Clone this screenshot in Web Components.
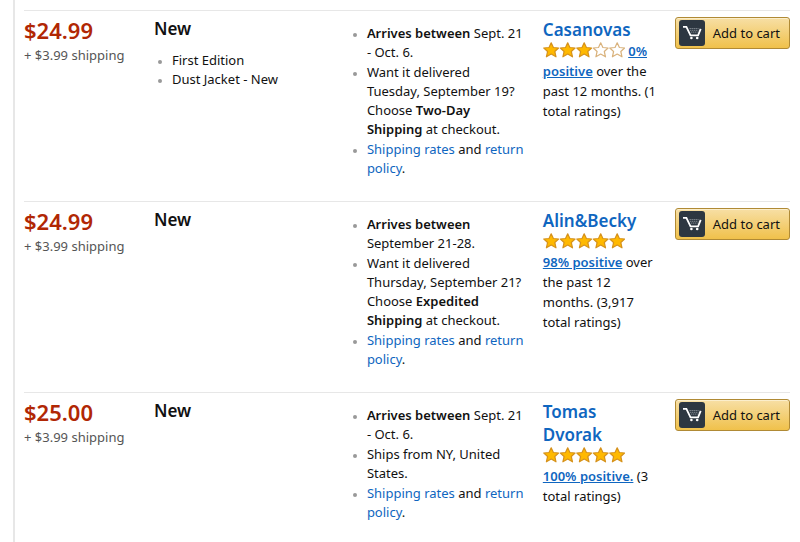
<!DOCTYPE html>
<html lang="en">
<head>
<meta charset="utf-8">
<meta name="viewport" content="width=device-width, initial-scale=1">
<title>Offers</title>
<style>
body { margin: 0; background: #fff; color: #111; font: 13px/19px "Noto Sans", "Open Sans", sans-serif; }
</style>
</head>
<body>
<offer-list>
  <offer-row>
    <price-tag slot="price" shipping="+ $3.99 shipping">$24.99</price-tag>
    <item-condition slot="condition" notes="First Edition|Dust Jacket - New">New</item-condition>
    <delivery-notes slot="delivery">
      <delivery-note><b>Arrives between</b> Sept. 21 - Oct. 6.</delivery-note>
      <delivery-note>Want it delivered Tuesday, September 19? Choose <b>Two-Day Shipping</b> at checkout.</delivery-note>
      <delivery-note><a href="#rates">Shipping rates</a> and <a href="#returns">return policy</a>.</delivery-note>
    </delivery-notes>
    <seller-info slot="seller" name="Casanovas" stars="3" score="0% positive">over the past 12 months. (1 total ratings)</seller-info>
  </offer-row>
  <offer-row>
    <price-tag slot="price" shipping="+ $3.99 shipping">$24.99</price-tag>
    <item-condition slot="condition">New</item-condition>
    <delivery-notes slot="delivery">
      <delivery-note><b>Arrives between</b> September 21-28.</delivery-note>
      <delivery-note>Want it delivered Thursday, September 21? Choose <b>Expedited Shipping</b> at checkout.</delivery-note>
      <delivery-note><a href="#rates">Shipping rates</a> and <a href="#returns">return policy</a>.</delivery-note>
    </delivery-notes>
    <seller-info slot="seller" name="Alin&amp;Becky" stars="5" score="98%&nbsp;positive">over the past 12 months. (3,917 total ratings)</seller-info>
  </offer-row>
  <offer-row>
    <price-tag slot="price" shipping="+ $3.99 shipping">$25.00</price-tag>
    <item-condition slot="condition">New</item-condition>
    <delivery-notes slot="delivery">
      <delivery-note><b>Arrives between</b> Sept. 21 - Oct. 6.</delivery-note>
      <delivery-note>Ships from NY, United States.</delivery-note>
      <delivery-note><a href="#rates">Shipping rates</a> and <a href="#returns">return policy</a>.</delivery-note>
    </delivery-notes>
    <seller-info slot="seller" name="Tomas Dvorak" stars="5" score="100%&nbsp;positive.">(3 total ratings)</seller-info>
  </offer-row>
</offer-list>

<script>
const define = (name, html, setup) => {
  const template = document.createElement('template');
  template.innerHTML = html;
  customElements.define(name, class extends HTMLElement {
    constructor() {
      super();
      this.attachShadow({ mode: 'open' }).append(template.content.cloneNode(true));
    }
    connectedCallback() {
      if (setup && !this.ready) { this.ready = true; setup(this, this.shadowRoot); }
    }
  });
};

define('offer-list', `
<style>
:host { display: block; box-sizing: border-box; min-height: 100vh; margin-left: 13px; padding: 10px 10px 0 9px; border-left: 2px solid #e7e7e7; }
</style>
<slot></slot>`);

define('offer-row', `
<style>
:host { display: grid; grid-template-columns: 130fr 200fr 189fr 132fr auto; align-items: start; padding: 6px 0 23px; border-top: 1px solid #e7e7e7; }
</style>
<slot name="price"></slot>
<slot name="condition"></slot>
<slot name="delivery"></slot>
<slot name="seller"></slot>
<cart-button>Add to cart</cart-button>`);

define('price-tag', `
<style>
:host { display: flex; flex-direction: column; gap: 3px; color: #555; }
strong { color: #b12704; font-size: 22px; line-height: 26px; font-weight: 600; }
</style>
<strong><slot></slot></strong><span></span>`,
(host, root) => { root.querySelector('span').textContent = host.getAttribute('shipping'); });

define('item-condition', `
<style>
:host { display: block; }
h3 { margin: 0; font-size: 17px; line-height: 24px; font-weight: 600; }
ul { margin: 10px 0 0; padding: 0 0 0 18px; }
li::marker { color: #999; font-size: 10px; }
</style>
<h3><slot></slot></h3>`,
(host, root) => {
  const notes = host.getAttribute('notes');
  if (!notes) return;
  const list = document.createElement('ul');
  for (const note of notes.split('|')) {
    const item = document.createElement('li');
    item.textContent = note;
    list.append(item);
  }
  root.append(list);
});

define('delivery-notes', `
<style>
:host { display: flex; flex-direction: column; gap: 1px; padding: 7px 18px 0 13px; }
</style>
<slot></slot>`,
host => host.setAttribute('role', 'list'));

define('delivery-note', `
<style>
:host { display: block; }
div { display: list-item; list-style: disc; }
div::marker { color: #999; font-size: 10px; }
::slotted(b) { font-weight: 600; }
::slotted(a) { color: #0f66c0; text-decoration: none; }
</style>
<div role="listitem"><slot></slot></div>`);

define('seller-info', `
<style>
:host { display: block; padding: 1px 16px 0 0; line-height: 20px; }
h3 { margin: 0; font-size: 17px; line-height: 23px; font-weight: 600; }
a { color: #0f66c0; }
h3 a { text-decoration: none; }
p { margin: 0; }
p a { font-weight: 600; }
</style>
<h3><a href="#seller"></a></h3>
<p><star-rating></star-rating> <a href="#ratings"></a> <slot></slot></p>`,
(host, root) => {
  root.querySelector('h3 a').textContent = host.getAttribute('name');
  root.querySelector('star-rating').setAttribute('value', host.getAttribute('stars'));
  root.querySelector('p a').textContent = host.getAttribute('score');
});

// Defined after seller-info, which sets the value it reads.
define('star-rating', `
<style>
:host { display: inline-flex; vertical-align: -2px; }
svg { display: block; width: 82px; height: 16px; }
path { fill: #fff; stroke: #d9b27c; stroke-width: 1.2; stroke-linejoin: round; }
.on { fill: #ffb900; stroke: #d6921c; }
</style>`,
(host, root) => {
  const value = Number(host.getAttribute('value'));
  host.setAttribute('role', 'img');
  host.setAttribute('aria-label', value + ' out of 5 stars');
  const star = 'M8.2 .8 10.4 5.5 15.6 6 11.8 9.5 13 14.8 8.2 12.1 3.4 14.8 4.6 9.5 .8 6 6 5.5Z';
  let stars = '';
  for (let i = 0; i < 5; i++) {
    stars += `<path class="${i < value ? 'on' : ''}" transform="translate(${i * 16.5})" d="${star}"/>`;
  }
  root.innerHTML += `<svg viewBox="0 0 82 16">${stars}</svg>`;
});

define('cart-button', `
<style>
:host { display: block; }
button { display: flex; align-items: center; gap: 8px; margin: 0; padding: 2px 9px 2px 3px; border: 1px solid #b08a35; border-radius: 3px; background: linear-gradient(#f7dfa5, #f0c14b); box-shadow: inset 0 1px 0 #fbeecb; color: #111; font: inherit; line-height: 26px; white-space: nowrap; cursor: pointer; }
svg { width: 26px; height: 26px; border-radius: 3px; background: #2d3741; }
</style>
<button type="button">
<svg viewBox="0 0 26 26" aria-hidden="true" fill="none" stroke="#fff"><path d="M4 6.8H7.4l4.1 8.6h7.6l2.6-6.6" stroke-width="1.8"/><path d="M10.5 8.5h9M11 10.3h8.4M12 12.1h6.6" stroke="#7d858d" stroke-width="1" stroke-dasharray="1.4 .6"/><g fill="#fff" stroke="none"><circle cx="12.4" cy="18" r="1.3"/><circle cx="18.2" cy="18" r="1.3"/></g></svg>
<slot></slot></button>`);
</script>
</body>
</html>
